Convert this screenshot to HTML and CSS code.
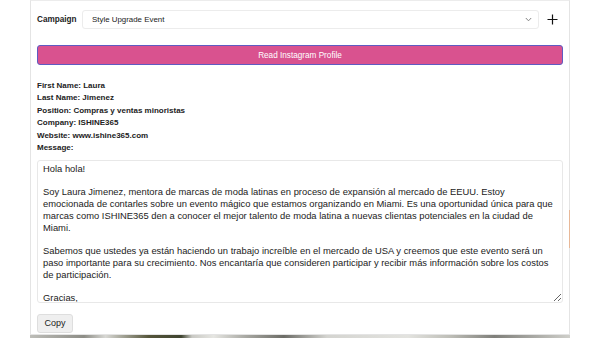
FILE: index.html
```html
<!DOCTYPE html>
<html lang="es">
<head>
<meta charset="utf-8">
<title>Campaign</title>
<link rel="stylesheet" href="styles.css">
</head>
<body>
<div class="stage">
  <div class="panel">
    <div class="campaign-row">
      <label class="campaign-label">Campaign</label>
      <div class="select">
        <span class="select-text">Style Upgrade Event</span>
        <svg class="chevron" width="7" height="5" viewBox="0 0 7 5"><path d="M0.8 1 L3.5 3.8 L6.2 1" fill="none" stroke="#777" stroke-width="0.9"/></svg>
      </div>
      <svg class="plus" width="11" height="11" viewBox="0 0 11 11"><path d="M5.5 0.5 V10.5 M0.5 5.5 H10.5" stroke="#111" stroke-width="1.2"/></svg>
    </div>
    <button class="read-btn">Read Instagram Profile</button>
    <div class="info">
      <div>First Name: Laura</div>
      <div>Last Name: Jimenez</div>
      <div>Position: Compras y ventas minoristas</div>
      <div>Company: ISHINE365</div>
      <div>Website: www.ishine365.com</div>
      <div>Message:</div>
    </div>
    <textarea class="message" wrap="off">Hola hola!

Soy Laura Jimenez, mentora de marcas de moda latinas en proceso de expansión al mercado de EEUU. Estoy
emocionada de contarles sobre un evento mágico que estamos organizando en Miami. Es una oportunidad única para que
marcas como ISHINE365 den a conocer el mejor talento de moda latina a nuevas clientas potenciales en la ciudad de
Miami.

Sabemos que ustedes ya están haciendo un trabajo increíble en el mercado de USA y creemos que este evento será un
paso importante para su crecimiento. Nos encantaría que consideren participar y recibir más información sobre los costos
de participación.

Gracias,
Laura Jimenez</textarea>
    <button class="copy-btn">Copy</button>
  </div>
  <div class="accent"></div>
</div>
</body>
</html>
```
FILE: styles.css
```css
html, body {
  margin: 0;
  padding: 0;
}
body {
  width: 600px;
  height: 338px;
  overflow: hidden;
  background: #ffffff;
  font-family: "Liberation Sans", Arial, sans-serif;
  color: #222;
}
.stage {
  position: relative;
  margin-left: 30px;
  width: 540px;
  height: 338px;
  background: linear-gradient(90deg, #bdbdb8 0%, #8d8d86 10%, #d8d8d4 14%, #55553a 22%, #3f4430 28%, #c9c9c4 30%, #e6e6e2 34%, #a8a8a2 40%, #6c6c66 47%, #d4d4d0 55%, #e3e3df 70%, #bdbdb6 78%, #7f7f7a 86%, #cfcfca 100%);
}
.panel {
  box-sizing: border-box;
  height: 335px;
  width: 540px;
  background: #fff;
  border: 1px solid #e4e4e4;
  border-top: 1px solid #ececec;
  padding: 9px 6px 0 6px;
  display: flex;
  flex-direction: column;
}
.campaign-row {
  display: flex;
  align-items: center;
  height: 19px;
}
.campaign-label {
  font-weight: bold;
  font-size: 8.2px;
  width: 45px;
}
.select {
  box-sizing: border-box;
  width: 457px;
  height: 19px;
  border: 1px solid #ececec;
  border-radius: 3px;
  display: flex;
  align-items: center;
  padding: 0 6px 0 9px;
}
.select-text {
  flex: 1;
  font-size: 7.9px;
  color: #222;
}
.chevron {
  display: block;
}
.plus {
  margin-left: 8px;
  display: block;
}
.read-btn {
  box-sizing: border-box;
  margin-top: 16px;
  width: 526px;
  height: 20px;
  background: #d9528f;
  border: 1px solid #5f5bc2;
  border-radius: 3px;
  color: #fff;
  font-family: "Liberation Sans", Arial, sans-serif;
  font-size: 8.2px;
  padding: 0;
}
.info {
  margin-top: 15px;
  font-size: 8px;
  font-weight: bold;
  line-height: 12.45px;
  color: #222;
}
.message {
  box-sizing: border-box;
  margin-top: 5px;
  width: 526px;
  height: 143px;
  border: 1px solid #e8e8e8;
  border-radius: 3px;
  padding: 2px 5px;
  font-family: "Liberation Sans", Arial, sans-serif;
  font-size: 9.4px;
  line-height: 11.8px;
  color: #222;
  white-space: pre;
  resize: vertical;
  overflow: hidden;
  outline: none;
}
.copy-btn {
  box-sizing: border-box;
  margin-top: 11px;
  width: 36px;
  height: 19px;
  background: #efefef;
  border: 1px solid #dedede;
  border-radius: 3px;
  font-family: "Liberation Sans", Arial, sans-serif;
  font-size: 9px;
  color: #222;
  padding: 0;
}
.accent {
  position: absolute;
  left: 539px;
  top: 210px;
  width: 1px;
  height: 38px;
  background: #e8b898;
}
```
